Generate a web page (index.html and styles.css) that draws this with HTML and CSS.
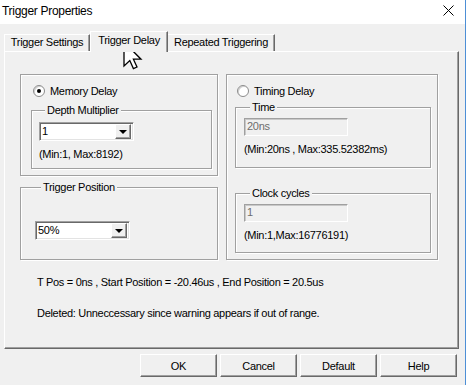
FILE: index.html
```html
<!DOCTYPE html>
<html lang="en">
<head>
  <meta charset="UTF-8">
  <title>Trigger Properties</title>
  <link rel="stylesheet" href="styles.css">
</head>
<body>
  <div class="window">
    <header class="titlebar">
      <span class="title">Trigger Properties</span>
      <svg class="close" width="11" height="11" viewBox="0 0 11 11">
        <path d="M0.5 0.5 L10.5 10.5 M10.5 0.5 L0.5 10.5" stroke="#000" stroke-width="1"/>
      </svg>
    </header>

    <div class="tabs">
      <div class="tab tab-settings">Trigger Settings</div>
      <div class="tab tab-delay active">Trigger Delay</div>
      <div class="tab tab-repeat">Repeated Triggering</div>
    </div>

    <div class="panel">
      <div class="cols">
        <div class="col col-left">
          <div class="box memory-box">
            <div class="radio-row">
              <span class="radio checked"></span>
              <span>Memory Delay</span>
            </div>
            <div class="gb depth-gb">
              <div class="gb-label">Depth Multiplier</div>
              <div class="combo">
                <span class="combo-value">1</span>
                <span class="combo-btn"><span class="tri"></span></span>
              </div>
              <div class="hint">(Min:1, Max:8192)</div>
            </div>
          </div>
          <div class="gb position-gb">
            <div class="gb-label">Trigger Position</div>
            <div class="combo combo-pos">
              <span class="combo-value">50%</span>
              <span class="combo-btn"><span class="tri"></span></span>
            </div>
          </div>
        </div>

        <div class="col col-right">
          <div class="box timing-box">
            <div class="radio-row">
              <span class="radio"></span>
              <span>Timing Delay</span>
            </div>
            <div class="gb time-gb">
              <div class="gb-label">Time</div>
              <div class="field disabled">20ns</div>
              <div class="hint">(Min:20ns , Max:335.52382ms)</div>
            </div>
            <div class="gb clock-gb">
              <div class="gb-label">Clock cycles</div>
              <div class="field disabled">1</div>
              <div class="hint">(Min:1,Max:16776191)</div>
            </div>
          </div>
        </div>
      </div>

      <p class="info info-pos">T Pos = 0ns , Start Position = -20.46us , End Position = 20.5us</p>
      <p class="info info-note">Deleted: Unneccessary since warning appears if out of range.</p>
    </div>

    <div class="buttons">
      <button class="btn">OK</button>
      <button class="btn">Cancel</button>
      <button class="btn">Default</button>
      <button class="btn">Help</button>
    </div>

    <svg class="cursor" width="20" height="30" viewBox="0 0 20 30">
      <path d="M1 1 L1 25 L6.8 19.6 L10.4 27.6 L14 26 L10.4 18.2 L18 18.2 Z" fill="#fff" stroke="#000" stroke-width="1.3" stroke-linejoin="miter"/>
    </svg>
  </div>
</body>
</html>
```

FILE: styles.css
```css
* {
  margin: 0;
  padding: 0;
  box-sizing: border-box;
}
body {
  background: #f0f0f0;
  font-family: "Liberation Sans", Arial, sans-serif;
  font-size: 11px;
  letter-spacing: -0.3px;
  color: #000;
  overflow: hidden;
}
.window {
  position: relative;
  width: 466px;
  height: 385px;
  background: #f0f0f0;
  border-right: 1px solid #4d8fd6;
}
.titlebar {
  height: 24px;
  background: #fff;
  display: flex;
  align-items: center;
  justify-content: space-between;
  padding-left: 2px;
  padding-right: 11px;
}
.title {
  font-size: 12px;
  letter-spacing: -0.3px;
  margin-top: -2px;
}
.close {
  display: block;
  margin-top: -3px;
}

/* tabs */
.tabs {
  height: 27px;
  display: flex;
  align-items: flex-end;
  padding-left: 4px;
}
.tab {
  height: 17px;
  line-height: 15px;
  text-align: center;
  border-top: 1px solid #fff;
  border-left: 1px solid #fff;
  border-right: 1px solid #696969;
  box-shadow: inset -1px 0 #a0a0a0;
  background: #f0f0f0;
}
.tab-settings { width: 86px; }
.tab-delay { width: 78px; }
.tab-repeat { width: 107px; border-left: none; }
.tab.active {
  position: relative;
  z-index: 1;
  height: 21px;
  line-height: 17px;
  margin-bottom: -1px;
}

/* panel */
.panel {
  margin-left: 4px;
  width: 455px;
  height: 298px;
  border-top: 1px solid #fff;
  border-left: 1px solid #fff;
  border-right: 1px solid #696969;
  border-bottom: 1px solid #696969;
  box-shadow: inset -1px -1px #a0a0a0;
  padding: 22px 0 0 15px;
}
.cols {
  display: flex;
  gap: 8px;
}
.col-left { width: 198px; }
.col-right { width: 212px; }

.box {
  border: 1px solid #a0a0a0;
  box-shadow: inset 1px 1px #fff, 1px 1px #fff;
}
.memory-box {
  height: 102px;
  padding: 10px 0 0 12px;
}
.timing-box {
  height: 186px;
  padding: 10px 0 0 10px;
}
.radio-row {
  display: flex;
  align-items: center;
  gap: 5px;
  height: 12px;
  line-height: 13px;
}
.radio {
  width: 12px;
  height: 12px;
  border-radius: 50%;
  background: #fff;
  border: 1px solid #8c8c8c;
  box-shadow: inset 1px 1px #d0d0d0;
  display: flex;
  align-items: center;
  justify-content: center;
}
.radio.checked::after {
  content: "";
  width: 4px;
  height: 4px;
  border-radius: 50%;
  background: #000;
}

/* group boxes */
.gb {
  border: 1px solid #a0a0a0;
  box-shadow: inset 1px 1px #fff, 1px 1px #fff;
}
.gb-label {
  width: fit-content;
  margin: -7px 0 0 6px;
  padding: 0 2px;
  line-height: 13px;
  background: #f0f0f0;
}
.depth-gb {
  margin: 13px 0 0 -2px;
  width: 181px;
  height: 59px;
  padding-left: 7px;
}
.position-gb {
  margin-top: 11px;
  height: 73px;
  padding-left: 14px;
}
.time-gb {
  margin: 10px 0 0 -2px;
  width: 196px;
  height: 61px;
  padding-left: 8px;
}
.clock-gb {
  margin: 25px 0 0 -2px;
  width: 196px;
  height: 60px;
  padding-left: 8px;
}

/* combo boxes */
.combo {
  margin-top: 5px;
  width: 95px;
  height: 19px;
  background: #fff;
  border: 1px solid;
  border-color: #a0a0a0 #fff #fff #a0a0a0;
  box-shadow: inset 1px 1px #696969, inset -1px -1px #e3e3e3;
  display: flex;
  align-items: center;
  justify-content: space-between;
  padding: 2px 2px 2px 2px;
}
.combo-pos {
  margin-top: 27px;
}
.combo-value {
  line-height: 13px;
}
.combo-btn {
  width: 16px;
  height: 15px;
  background: #f0f0f0;
  border: 1px solid;
  border-color: #fff #696969 #696969 #fff;
  box-shadow: inset -1px -1px #a0a0a0;
  display: flex;
  align-items: center;
  justify-content: center;
}
.tri {
  width: 0;
  height: 0;
  border-left: 4px solid transparent;
  border-right: 4px solid transparent;
  border-top: 4px solid #000;
  margin-top: 1px;
}

/* disabled fields */
.field {
  margin-top: 4px;
  width: 104px;
  height: 18px;
  line-height: 15px;
  padding-left: 2px;
  border: 1px solid;
  border-color: #a0a0a0 #fff #fff #a0a0a0;
  box-shadow: inset 1px 1px #c8c8c8;
}
.field.disabled {
  background: #f0f0f0;
  color: #6d6d6d;
}
.hint {
  margin-top: 7px;
  line-height: 13px;
}

.info {
  margin-left: 17px;
  line-height: 13px;
}
.info-pos { margin-top: 16px; }
.info-note { margin-top: 18px; }

/* buttons */
.buttons {
  display: flex;
  justify-content: flex-end;
  gap: 3px;
  padding: 5px 8px 0 0;
}
.btn {
  width: 77px;
  height: 23px;
  font-family: inherit;
  font-size: 11px;
  letter-spacing: -0.3px;
  background: #f0f0f0;
  border: 1px solid;
  border-color: #fff #696969 #696969 #fff;
  box-shadow: inset -1px -1px #a0a0a0;
  color: #000;
}

.cursor {
  position: absolute;
  left: 123px;
  top: 41px;
}
```
